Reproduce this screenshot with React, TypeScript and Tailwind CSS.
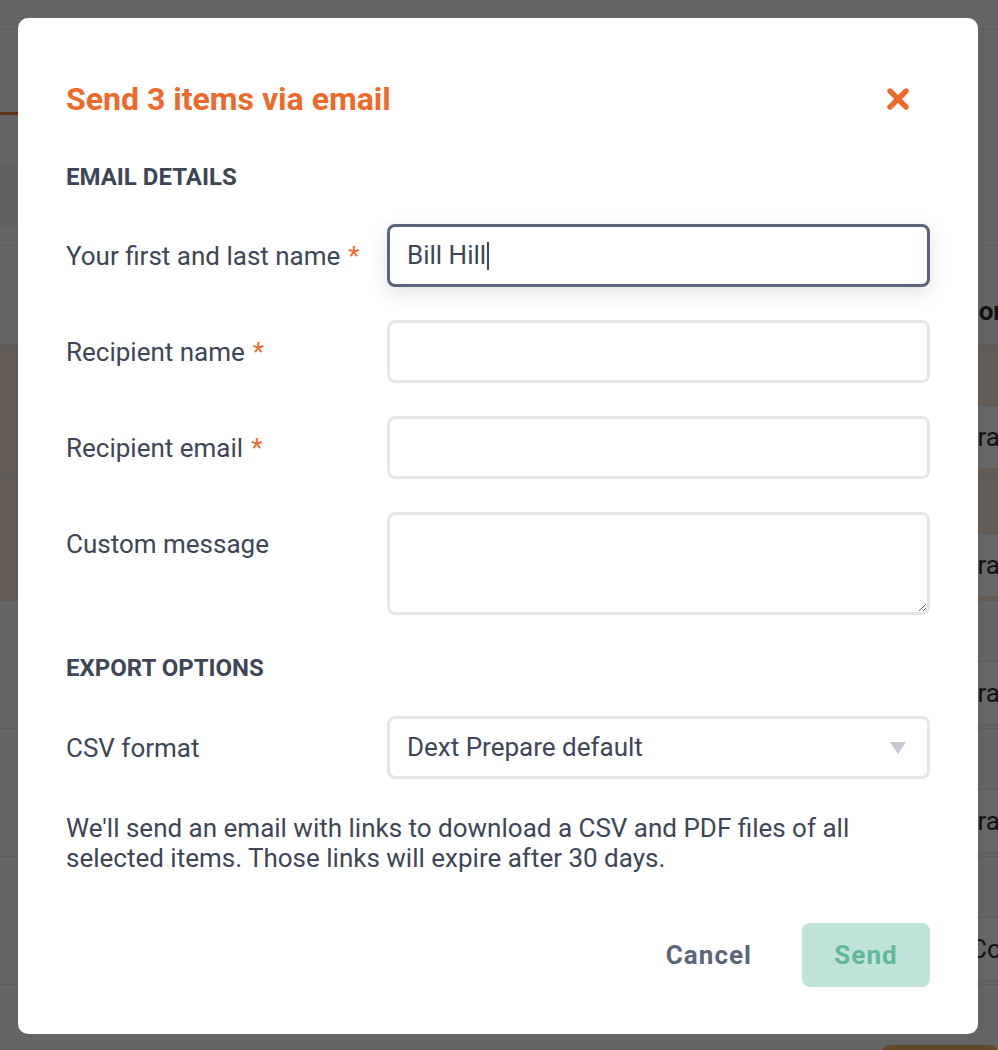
import { X } from "lucide-react";

const rows = [
  { selected: true, text: "Transfer", pad: "pl-[13px]" },
  { selected: true, text: "Transfer", pad: "pl-[13px]" },
  { selected: false, text: "Transfer", pad: "pl-[13px]" },
  { selected: false, text: "Transfer", pad: "pl-[13px]" },
  { selected: false, text: "Cost of sales", pad: "pl-[20px]" },
];

function BackgroundPage() {
  return (
    <div className="h-[1050px] overflow-hidden bg-[#fbfbfb] text-[#2a2f3a]">
      <div className="h-[30px] border-b border-gray-200" />
      <div className="flex h-[85px] items-end">
        <div className="h-full w-[150px] border-b-[3px] border-[#f97a3a]" />
      </div>
      <div className="h-[48px]" />
      <div className="h-[65px] w-[360px] rounded bg-[#edf2f7]" />
      <div className="h-[17px]" />
      <div className="flex h-[100px] border-t border-b border-gray-200 pt-[50px]">
        <div className="w-[919px] shrink-0" />
        <span className="whitespace-nowrap text-[26px] font-bold leading-[30px]">Vendor</span>
      </div>
      {rows.map((row, i) => (
        <div
          key={i}
          className={`flex h-[128px] border-b border-gray-200 pt-[60px] ${row.selected ? "bg-[#f7e6d9]" : "bg-[#fbfbfb]"}`}
        >
          <div className="w-[950px] shrink-0" />
          <div className={`flex h-[64px] w-[200px] shrink-0 items-center border-y border-gray-200 bg-white ${row.pad}`}>
            <span className="whitespace-nowrap text-[26px]">{row.text}</span>
          </div>
        </div>
      ))}
      <div className="flex pt-[60px]">
        <div className="ml-auto h-10 w-[116px] rounded-t-lg bg-[#f5b863]" />
      </div>
    </div>
  );
}

function Label({ text, required }: { text: string; required?: boolean }) {
  return (
    <div className="flex h-[63px] items-center text-[26px] leading-[30px] text-[#3e4656]">
      {text}
      {required && <span className="ml-2 text-[#ee6a2c]">*</span>}
    </div>
  );
}

export default function App() {
  return (
    <div className="relative font-['Roboto',sans-serif]">
      <BackgroundPage />

      <div className="fixed inset-0 flex items-start bg-black/60 pl-[18px] pt-[18px]">
        <div className="flex w-[960px] flex-col rounded-[10px] bg-white px-12 pb-[47px] pt-[61px]">
          <div className="flex h-10 items-center justify-between">
            <h2 className="text-[32px] font-bold leading-10 text-[#ee6a2c]">Send 3 items via email</h2>
            <button className="mr-3 flex h-10 w-10 items-center justify-center text-[#ee6a2c]">
              <X size={32} strokeWidth={4} />
            </button>
          </div>

          <h3 className="mt-[46px] text-[24px] font-bold leading-6 text-[#3e4656]">EMAIL DETAILS</h3>

          <div className="mt-[35px] flex flex-col gap-[33px]">
            <div className="grid grid-cols-[321px_543px]">
              <Label text="Your first and last name" required />
              <div className="flex h-[63px] items-center rounded-lg border-[3px] border-[#5a657a] px-[17px] text-[26px] text-[#3e4656] shadow-[0_6px_20px_rgba(0,0,0,0.12)]">
                Bill Hill
                <span className="ml-px h-[28px] w-[2px] bg-[#3e4656]" />
              </div>
            </div>

            <div className="grid grid-cols-[321px_543px]">
              <Label text="Recipient name" required />
              <input className="h-[63px] rounded-lg border-[3px] border-[#e3e6eb] px-[17px] text-[26px] text-[#3e4656] outline-none" />
            </div>

            <div className="grid grid-cols-[321px_543px]">
              <Label text="Recipient email" required />
              <input className="h-[63px] rounded-lg border-[3px] border-[#e3e6eb] px-[17px] text-[26px] text-[#3e4656] outline-none" />
            </div>

            <div className="grid grid-cols-[321px_543px] items-start">
              <Label text="Custom message" />
              <textarea className="h-[103px] rounded-lg border-[3px] border-[#e3e6eb] px-[17px] py-3 text-[26px] text-[#3e4656] outline-none" />
            </div>
          </div>

          <h3 className="mt-[41px] text-[24px] font-bold leading-6 text-[#3e4656]">EXPORT OPTIONS</h3>

          <div className="mt-9 grid grid-cols-[321px_543px]">
            <Label text="CSV format" />
            <div className="relative">
              <select className="h-[63px] w-full appearance-none rounded-lg border-[3px] border-[#e3e6eb] bg-white px-[17px] text-[26px] text-[#3e4656] outline-none">
                <option>Dext Prepare default</option>
              </select>
              <svg
                className="pointer-events-none absolute right-[24px] top-[26px]"
                width="16"
                height="12"
                viewBox="0 0 16 12"
              >
                <path d="M0 0 H16 L8 12 Z" fill="#c5c9d1" />
              </svg>
            </div>
          </div>

          <p className="mt-[34px] text-[26px] leading-[30px] text-[#3e4656]">
            We'll send an email with links to download a CSV and PDF files of all selected items. Those links
            will expire after 30 days.
          </p>

          <div className="mt-[50px] flex items-center justify-end gap-[26px]">
            <button className="h-16 px-6 text-[26px] font-bold tracking-[0.04em] text-[#5b6679]">Cancel</button>
            <button className="h-16 w-[128px] rounded-lg bg-[#bfe3d8] text-[26px] font-bold tracking-[0.04em] text-[#5fb89b]">
              Send
            </button>
          </div>
        </div>
      </div>
    </div>
  );
}
